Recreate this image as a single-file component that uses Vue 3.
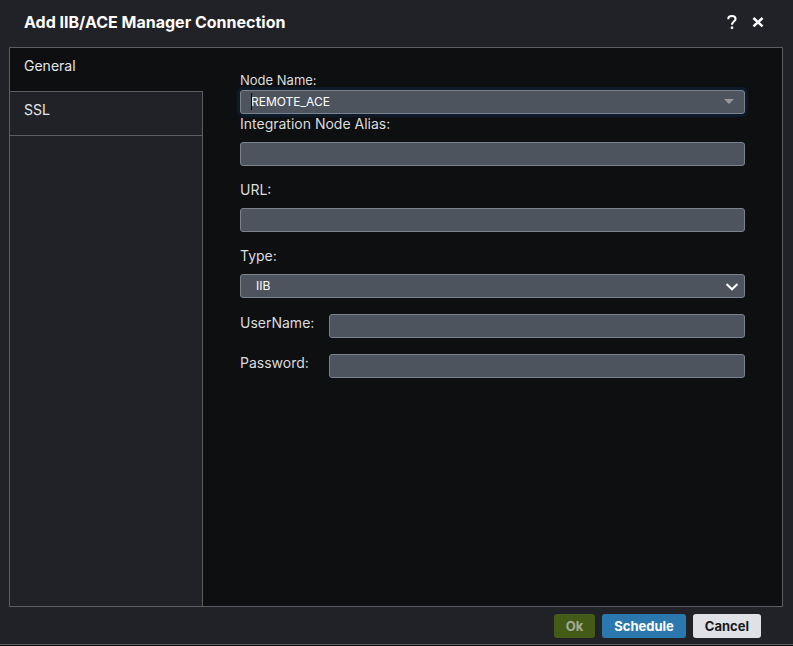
<script setup>
import { ref } from 'vue'

const tabs = ['General', 'SSL']
const activeTab = ref('General')
const form = ref({
  node: 'REMOTE_ACE',
  alias: '',
  url: '',
  type: 'IIB',
  username: '',
  password: ''
})
</script>

<template>
  <div class="dialog" role="dialog" aria-labelledby="dialog-title">
    <header class="header">
      <h1 id="dialog-title" class="title">Add IIB/ACE Manager Connection</h1>
      <div class="header-actions">
        <button class="icon-button" type="button" aria-label="Help">
          <svg width="12" height="16" viewBox="0 0 12 16" fill="none" stroke="#fff" stroke-width="2">
            <path d="M2.2 5.200C2.200 3 3.700 2 5.900 2C8.200 2 9.600 3.200 9.600 5C9.600 7.200 6 7.400 6 10.800" />
            <path d="M4.800 13.700H7.200" stroke-width="2.400" />
          </svg>
        </button>
        <button class="icon-button" type="button" aria-label="Close">
          <svg width="12" height="16" viewBox="0 0 12 16" fill="none" stroke="#fff" stroke-width="2.500">
            <path d="M1.400 4L10.600 12.400M10.600 4L1.400 12.400" />
          </svg>
        </button>
      </div>
    </header>

    <main class="body">
      <nav class="tabs" role="tablist">
        <button
          v-for="tab in tabs"
          :key="tab"
          type="button"
          role="tab"
          class="tab"
          :class="{ active: tab === activeTab }"
          :aria-selected="tab === activeTab"
          @click="activeTab = tab"
        >{{ tab }}</button>
      </nav>

      <form id="connection" class="form" @submit.prevent>
        <label class="label small" for="node">Node Name:</label>
        <div class="combo">
          <input id="node" v-model="form.node" class="control combo-input" type="text" role="combobox" aria-expanded="false">
          <span class="caret"></span>
          <svg class="combo-arrow" width="10" height="5" viewBox="0 0 10 5"><path d="M0 0H10L5 5Z" fill="#999" /></svg>
        </div>

        <div class="field">
          <label class="label" for="alias">Integration Node Alias:</label>
          <input id="alias" v-model="form.alias" class="control" type="text">
        </div>
        <div class="field">
          <label class="label" for="url">URL:</label>
          <input id="url" v-model="form.url" class="control" type="text">
        </div>
        <div class="field">
          <label class="label" for="type">Type:</label>
          <div class="select-wrap">
            <select id="type" v-model="form.type" class="control select">
              <option>IIB</option>
              <option>ACE</option>
            </select>
            <svg class="select-arrow" width="14" height="8" viewBox="0 0 14 8" fill="none" stroke="#fff" stroke-width="2"><path d="M1.500 1L7 6.300L12.500 1" /></svg>
          </div>
        </div>
        <div class="credentials">
          <label class="label row-label" for="username">UserName:</label>
          <input id="username" v-model="form.username" class="control" type="text">
          <label class="label row-label" for="password">Password:</label>
          <input id="password" v-model="form.password" class="control" type="password">
        </div>
      </form>
    </main>

    <footer class="footer">
      <button class="button ok" type="submit" form="connection" disabled>Ok</button>
      <button class="button schedule" type="button">Schedule</button>
      <button class="button cancel" type="button">Cancel</button>
    </footer>
  </div>
</template>

<style>
body {
  margin: 0;
  background: #0d0e10;
}
</style>

<style scoped>
.dialog {
  box-sizing: border-box;
  display: flex;
  flex-direction: column;
  min-height: calc(100vh - 1px);
  background: #212227;
  border-bottom: 1px solid #5c5d61;
  color: #dcdddf;
  font-family: Inter, sans-serif;
  font-size: 14px;
}
button,
input,
select {
  font-family: inherit;
}
.header {
  display: flex;
  align-items: center;
  justify-content: space-between;
  height: 47px;
  padding: 0 29px 3px 24px;
  box-sizing: border-box;
}
.title {
  margin: 0;
  color: #fff;
  font-size: 16px;
  font-weight: 700;
  line-height: 20px;
}
.header-actions {
  display: flex;
  gap: 14px;
}
.icon-button {
  display: flex;
  padding: 0;
  border: 0;
  background: none;
  cursor: pointer;
}
.body {
  flex: 1;
  display: flex;
  margin: 0 10px 0 9px;
  border: 1px solid #5c5d61;
  background: #0d0f10;
}
.tabs {
  display: flex;
  flex-direction: column;
  flex: none;
  width: 193px;
}
.tabs::after {
  content: '';
  flex: 1;
  background: #212227;
  border-right: 1px solid #5c5d61;
}
.tab {
  display: flex;
  box-sizing: border-box;
  height: 44px;
  padding: 8px 14px;
  border: solid #5c5d61;
  border-width: 0 1px 1px 0;
  background: #212227;
  color: #e6e7e9;
  font-size: 14px;
  line-height: 20px;
  cursor: pointer;
}
.tab.active {
  border-right: 0;
  background: #0d0f10;
}
.form {
  flex: 1;
  min-width: 0;
  padding: 22px 37px;
}
.label {
  display: block;
  line-height: 20px;
}
.small {
  font-size: 13px;
}
.control {
  display: block;
  box-sizing: border-box;
  width: 100%;
  height: 24px;
  padding: 0 10px 2px;
  border: 1px solid #7a828e;
  border-radius: 3px;
  background: #4e545e;
  color: #fff;
  font-size: 12px;
  outline: none;
}
.combo,
.select-wrap {
  position: relative;
}
.combo-input {
  box-shadow: 0 0 0 3px #0d1a29;
}
.caret {
  position: absolute;
  top: 3px;
  left: 11px;
  width: 1px;
  height: 17px;
  background: #000;
}
.combo-arrow {
  position: absolute;
  top: 9px;
  right: 11px;
  pointer-events: none;
}
.field {
  margin-bottom: 14px;
}
.field .label {
  margin-bottom: 8px;
}
.select {
  appearance: none;
  padding: 0 15px 2px;
}
.select-arrow {
  position: absolute;
  top: 9px;
  right: 6px;
  pointer-events: none;
}
.credentials {
  display: grid;
  grid-template-columns: 72px 1fr;
  gap: 16px 17px;
  padding-top: 2px;
}
.row-label {
  line-height: 18px;
}
.footer {
  display: flex;
  justify-content: flex-end;
  gap: 7px;
  padding: 7px 32px 6px;
}
.button {
  height: 24px;
  padding: 0 12px;
  border: 0;
  border-radius: 3px;
  font-size: 13px;
  font-weight: 700;
  cursor: pointer;
}
.ok {
  background: #445b17;
  color: #a5aa9b;
}
.schedule {
  background: #2b78af;
  color: #fff;
}
.cancel {
  background: #e0e1e6;
  color: #17191d;
}
</style>
